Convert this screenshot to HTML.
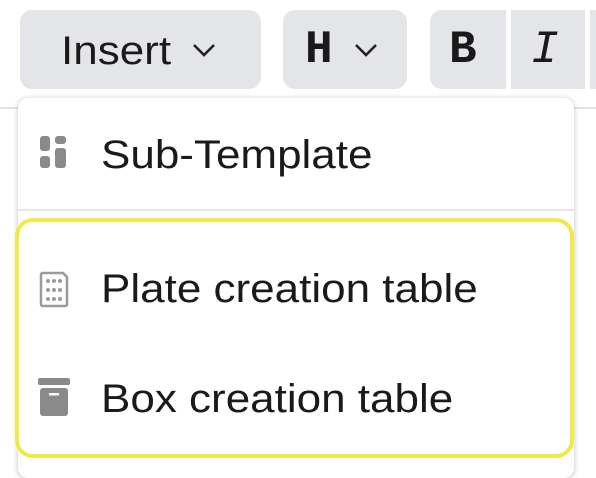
<!DOCTYPE html>
<html><head><style>
body{margin:0;width:596px;height:464px;background:#fff;position:relative;overflow:hidden;font-family:"Liberation Sans",sans-serif;color:#1a1a1a}
.b{position:absolute;background:#e4e5e8;border-radius:12px;top:10px;height:79px}
.t{position:absolute;font-size:40px;line-height:40px;transform:scaleX(1.1);transform-origin:0 0;white-space:nowrap}
.m{position:absolute;font-family:"Liberation Mono",monospace;font-weight:bold;font-size:46px;line-height:46px}
</style></head><body>
<div style="position:absolute;left:0;right:0;top:107px;height:2px;background:#e2e2e4"></div>
<div class="b" style="left:20px;width:241px"></div>
<div class="t" style="left:61px;top:31px">Insert</div>
<svg style="position:absolute;left:190px;top:41px" width="28" height="18"><path d="M4 4 L14 14 L24 4" fill="none" stroke="#222" stroke-width="2.6"/></svg>
<div class="b" style="left:283px;width:124px"></div>
<div class="m" style="left:305px;top:27px">H</div>
<svg style="position:absolute;left:352px;top:41px" width="28" height="18"><path d="M4 4 L14 14 L24 4" fill="none" stroke="#222" stroke-width="2.6"/></svg>
<div class="b" style="left:430px;width:76px;border-radius:12px 0 0 12px"></div>
<div class="m" style="left:449px;top:27px">B</div>
<div class="b" style="left:511px;width:74px;border-radius:0"></div>
<div class="m" style="left:531px;top:27px;font-style:italic;font-weight:normal">I</div>
<div class="b" style="left:590px;width:10px;border-radius:0"></div>
<div style="position:absolute;left:18px;top:98px;width:556px;height:380px;background:#fff;border-radius:10px;box-shadow:0 1px 6px rgba(0,0,0,.25)"></div>
<svg style="position:absolute;left:38px;top:134px" width="32" height="40">
<rect x="2" y="2" width="10" height="15" rx="3" fill="#8a8a8a"/><rect x="17" y="2" width="11" height="8" rx="3" fill="#8a8a8a"/>
<rect x="2" y="22" width="10" height="12" rx="3" fill="#8a8a8a"/><rect x="17" y="14" width="11" height="20" rx="3" fill="#8a8a8a"/></svg>
<div class="t" style="left:101px;top:135px">Sub-Template</div>
<div style="position:absolute;left:18px;top:209px;width:556px;height:2px;background:#e6e6e8"></div>
<div style="position:absolute;left:15px;top:218px;width:551px;height:232px;border:4px solid #f1e94a;border-radius:18px"></div>
<svg style="position:absolute;left:38px;top:270px" width="32" height="40">
<path d="M4 3 H25 L29 7 V34 Q29 36 27 36 H5 Q3 36 3 34 V5 Q3 3 5 3 Z" fill="none" stroke="#9a9a9a" stroke-width="2.5" stroke-linejoin="round"/>
<g fill="#9a9a9a"><circle cx="10" cy="11" r="2"/><circle cx="16" cy="11" r="2"/><circle cx="22" cy="11" r="2"/>
<circle cx="10" cy="20" r="2"/><circle cx="16" cy="20" r="2"/><circle cx="22" cy="20" r="2"/>
<circle cx="10" cy="29" r="2"/><circle cx="16" cy="29" r="2"/><circle cx="22" cy="29" r="2"/></g></svg>
<div class="t" style="left:101px;top:269px">Plate creation table</div>
<svg style="position:absolute;left:37px;top:377px" width="34" height="42">
<rect x="1" y="1" width="32" height="7" rx="2" fill="#8a8a8a"/><rect x="3" y="11" width="28" height="28" rx="3" fill="#8a8a8a"/>
<rect x="12" y="16" width="10" height="2.5" fill="#fff"/></svg>
<div class="t" style="left:101px;top:379px">Box creation table</div>
</body></html>
